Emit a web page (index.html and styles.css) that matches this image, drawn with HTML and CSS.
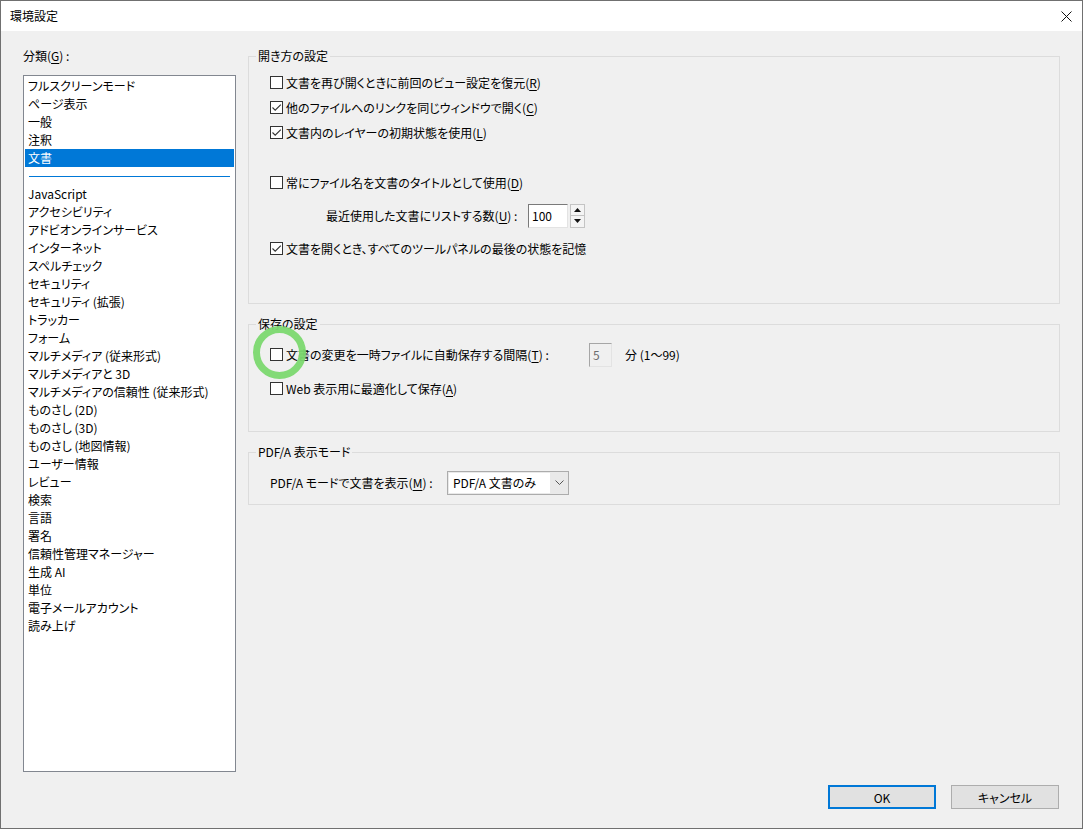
FILE: index.html
```html
<!DOCTYPE html>
<html lang="ja">
<head>
<meta charset="utf-8">
<title>環境設定</title>
<link rel="stylesheet" href="styles.css">
</head>
<body>
<div class="window">
  <div class="titlebar">
    <span class="title">環境設定</span>
    <svg class="close" width="11" height="11" viewBox="0 0 11 11"><path d="M0.5 0.5 L10.5 10.5 M10.5 0.5 L0.5 10.5" stroke="#111" stroke-width="1" fill="none"/></svg>
  </div>
  <div class="main">
    <div class="left">
      <div class="cat-label">分類(<u>G</u>) :</div>
      <div class="list">
        <div class="item">フルスクリーンモード</div>
        <div class="item">ページ表示</div>
        <div class="item">一般</div>
        <div class="item">注釈</div>
        <div class="item selected">文書</div>
        <div class="sep"><div class="sep-line"></div></div>
        <div class="item">JavaScript</div>
        <div class="item">アクセシビリティ</div>
        <div class="item">アドビオンラインサービス</div>
        <div class="item">インターネット</div>
        <div class="item">スペルチェック</div>
        <div class="item">セキュリティ</div>
        <div class="item">セキュリティ (拡張)</div>
        <div class="item">トラッカー</div>
        <div class="item">フォーム</div>
        <div class="item">マルチメディア (従来形式)</div>
        <div class="item">マルチメディアと 3D</div>
        <div class="item">マルチメディアの信頼性 (従来形式)</div>
        <div class="item">ものさし (2D)</div>
        <div class="item">ものさし (3D)</div>
        <div class="item">ものさし (地図情報)</div>
        <div class="item">ユーザー情報</div>
        <div class="item">レビュー</div>
        <div class="item">検索</div>
        <div class="item">言語</div>
        <div class="item">署名</div>
        <div class="item">信頼性管理マネージャー</div>
        <div class="item">生成 AI</div>
        <div class="item">単位</div>
        <div class="item">電子メールアカウント</div>
        <div class="item">読み上げ</div>
      </div>
    </div>
    <div class="right">
      <div class="group g1">
        <div class="group-title">開き方の設定</div>
        <div class="row r-first"><span class="cb"></span><span class="lbl">文書を再び開くときに前回のビュー設定を復元(<u>R</u>)</span></div>
        <div class="row"><span class="cb checked"><svg width="11" height="11" viewBox="0 0 11 11"><polyline points="1.5,5.5 4.2,8.2 9.8,2.6" fill="none" stroke="#333" stroke-width="1.1"/></svg></span><span class="lbl">他のファイルへのリンクを同じウィンドウで開く(<u>C</u>)</span></div>
        <div class="row"><span class="cb checked"><svg width="11" height="11" viewBox="0 0 11 11"><polyline points="1.5,5.5 4.2,8.2 9.8,2.6" fill="none" stroke="#333" stroke-width="1.1"/></svg></span><span class="lbl">文書内のレイヤーの初期状態を使用(<u>L</u>)</span></div>
        <div class="row r-gap"><span class="cb"></span><span class="lbl">常にファイル名を文書のタイトルとして使用(<u>D</u>)</span></div>
        <div class="row r-near">
          <span class="recent-label">最近使用した文書にリストする数(<u>U</u>) :</span>
          <span class="num-input">100</span>
          <span class="spin">
            <span class="spin-btn"><svg width="7" height="4" viewBox="0 0 7 4"><path d="M3.5 0 L7 4 L0 4 Z" fill="#111"/></svg></span>
            <span class="spin-btn"><svg width="7" height="4" viewBox="0 0 7 4"><path d="M0 0 L7 0 L3.5 4 Z" fill="#111"/></svg></span>
          </span>
        </div>
        <div class="row r-near"><span class="cb checked"><svg width="11" height="11" viewBox="0 0 11 11"><polyline points="1.5,5.5 4.2,8.2 9.8,2.6" fill="none" stroke="#333" stroke-width="1.1"/></svg></span><span class="lbl">文書を開くとき、すべてのツールパネルの最後の状態を記憶</span></div>
      </div>
      <div class="group g2">
        <div class="group-title">保存の設定</div>
        <div class="row r-first"><span class="cb"></span><span class="lbl autosave-label">文書の変更を一時ファイルに自動保存する間隔(<u>T</u>) :</span><span class="dis-input">5</span><span class="unit">分 (1〜99)</span></div>
        <div class="row r-second"><span class="cb"></span><span class="lbl">Web 表示用に最適化して保存(<u>A</u>)</span></div>
      </div>
      <div class="group g3">
        <div class="group-title">PDF/A 表示モード</div>
        <div class="row r-first"><span class="combo-label">PDF/A モードで文書を表示(<u>M</u>) :</span>
          <span class="combo"><span class="combo-text">PDF/A 文書のみ</span><svg class="chev" width="9" height="5" viewBox="0 0 9 5"><polyline points="0.5,0.5 4.5,4.5 8.5,0.5" fill="none" stroke="#555" stroke-width="1"/></svg></span>
        </div>
      </div>
    </div>
  </div>
  <div class="footer">
    <button class="btn default">OK</button>
    <button class="btn">キャンセル</button>
  </div>
  <div class="annot"></div>
</div>
</body>
</html>
```
FILE: styles.css
```css
* { box-sizing: border-box; }
html, body { margin: 0; padding: 0; }
body {
  font-family: "Noto Sans CJK JP", "Noto Sans", sans-serif;
  font-size: 12px;
  font-feature-settings: "palt";
  color: #000;
  background: #f0f0f0;
}
u { text-decoration: underline; text-underline-offset: 2px; }

.window {
  position: relative;
  width: 1083px;
  height: 829px;
  border: 1px solid #707070;
  background: #f0f0f0;
  display: flex;
  flex-direction: column;
}

.titlebar {
  height: 30px;
  background: #fff;
  display: flex;
  align-items: center;
  justify-content: space-between;
  padding-left: 9px;
  padding-right: 10px;
  flex: none;
}
.title { line-height: 16px; }
.close { display: block; }

.main {
  display: flex;
  padding-top: 17px;
  padding-left: 22px;
  flex: none;
}

.left { width: 213px; flex: none; }
.cat-label { line-height: 16px; height: 16px; }
.list {
  margin-top: 11px;
  height: 697px;
  border: 1px solid #828790;
  background: #fff;
  padding: 1px;
}
.item {
  height: 18px;
  line-height: 18px;
  padding-left: 3px;
  white-space: nowrap;
}
.item.selected { background: #0078d7; color: #fff; }
.sep {
  height: 18px;
  display: flex;
  align-items: center;
  padding: 0 4px;
}
.sep-line { height: 1px; width: 100%; background: #0078d7; }

.right {
  margin-left: 12px;
  width: 812px;
  flex: none;
}

.group {
  border: 1px solid #dcdcdc;
  padding-left: 21px;
}
.g1 { margin-top: 8px; padding-bottom: 42px; }
.g2 { margin-top: 20px; padding-bottom: 30px; }
.g3 { margin-top: 20px; padding-bottom: 9px; }

.group-title {
  display: table;
  margin: -9px 0 0 -14px;
  padding: 0 2px;
  line-height: 16px;
  height: 16px;
  background: #f0f0f0;
}

.row {
  height: 25px;
  display: flex;
  align-items: center;
  white-space: nowrap;
}
.r-first { margin-top: 6px; }
.g2 .r-first, .g3 .r-first { margin-top: 10px; }
.r-second { margin-top: 9px; }
.r-gap { margin-top: 25px; }
.r-near { margin-top: 8px; }

.cb {
  width: 13px;
  height: 13px;
  border: 1px solid #333;
  background: #fff;
  flex: none;
  display: flex;
  align-items: center;
  justify-content: center;
}
.cb svg { display: block; }
.lbl { margin-left: 3px; }

.recent-label { margin-left: 56px; width: 202px; }
.num-input {
  width: 40px;
  height: 24px;
  background: #fff;
  border-top: 1px solid #7a7a7a;
  border-left: 1px solid #7a7a7a;
  border-right: 1px solid #e3e3e3;
  border-bottom: 1px solid #e3e3e3;
  line-height: 22px;
  padding-left: 3px;
}
.spin {
  margin-left: 2px;
  width: 15px;
  height: 24px;
  display: flex;
  flex-direction: column;
  gap: 0;
}
.spin-btn {
  height: 12px;
  border: 1px solid #c4c4c4;
  background: #f4f4f4;
  display: flex;
  align-items: center;
  justify-content: center;
}
.spin-btn + .spin-btn { border-top: none; }
.spin-btn svg { display: block; }

.autosave-label { width: 303px; }
.dis-input {
  width: 23px;
  height: 24px;
  border-top: 1px solid #a6a6a6;
  border-left: 1px solid #a6a6a6;
  border-right: 1px solid #e3e3e3;
  border-bottom: 1px solid #e3e3e3;
  background: #f0f0f0;
  color: #6d6d6d;
  line-height: 22px;
  padding-left: 3px;
}
.unit { margin-left: 13px; }

.combo-label { width: 177px; }
.combo {
  width: 122px;
  height: 24px;
  border: 1px solid #acacac;
  background: #e9e9e9;
  display: flex;
  align-items: center;
  padding: 1px;
}
.combo-text {
  background: #fff;
  height: 100%;
  width: 101px;
  line-height: 20px;
  padding-left: 4px;
}
.chev { margin-left: 5px; display: block; }

.footer {
  margin-top: 13px;
  display: flex;
  justify-content: flex-end;
  gap: 15px;
  padding-right: 23px;
}
.btn {
  width: 108px;
  height: 24px;
  background: #e1e1e1;
  border: 1px solid #adadad;
  font-family: "Noto Sans CJK JP", "Noto Sans", sans-serif;
  font-size: 12px;
  font-feature-settings: "palt";
  color: #000;
  padding: 0;
  margin: 0;
}
.btn.default { border: 2px solid #0078d7; }

.annot {
  position: absolute;
  left: 252px;
  top: 325px;
  width: 53px;
  height: 53px;
  border: 7px solid #7bd86f;
  border-radius: 50%;
  opacity: 0.95;
  pointer-events: none;
}
```
